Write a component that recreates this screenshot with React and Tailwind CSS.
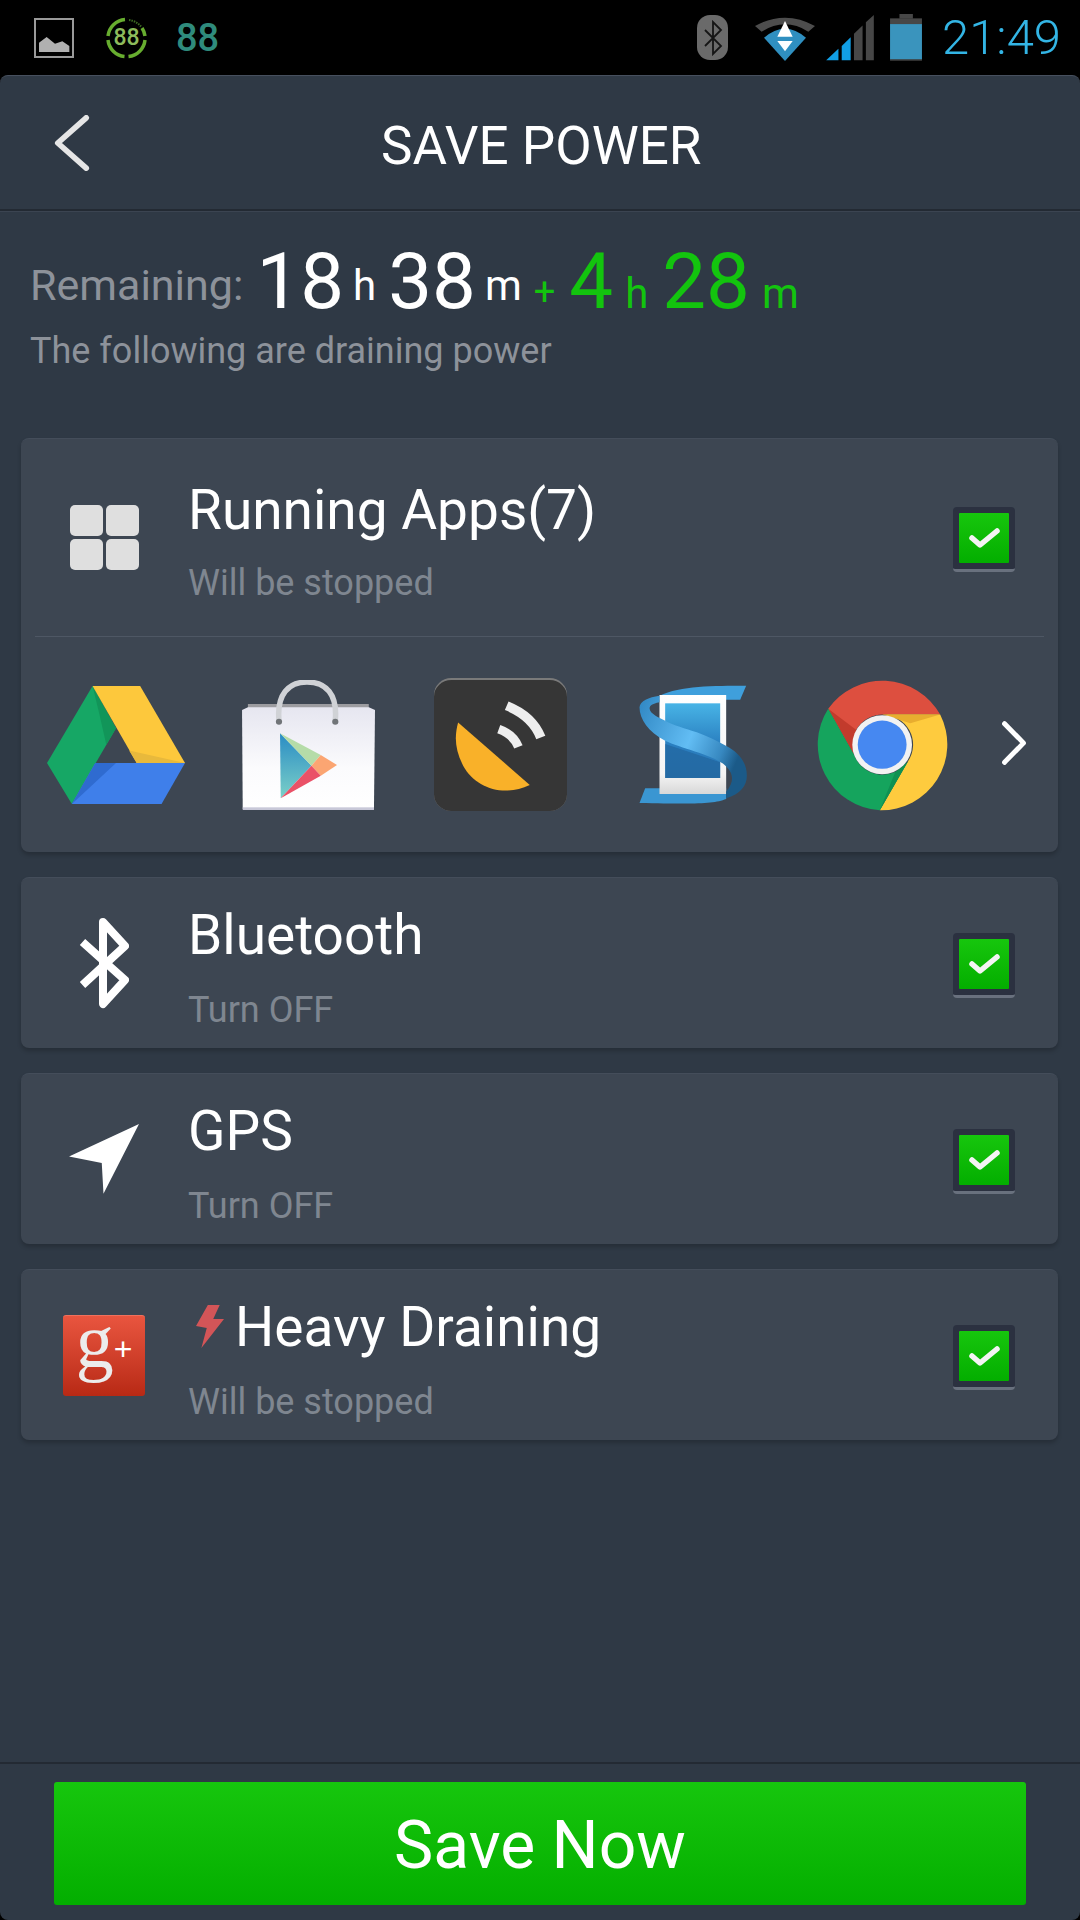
function StatusBar() {
  return (
    <div className="flex h-[75px] items-center bg-black">
      <svg viewBox="27 38 120 120" className="ml-[34px] h-[40px] w-[40px]">
        <rect x="30" y="41" width="114" height="114" fill="#000" stroke="#9a9a9a" strokeWidth="6" />
        <path d="M42 140 L42 112 L65 95 L90 115 L112 108 L133 122 L133 140 Z" fill="#b0b0b0" />
      </svg>
      <div className="relative ml-[31px] h-[42px] w-[43px]">
        <svg viewBox="0 0 43 42" className="h-full w-full" fill="none" stroke="#67ad2f" strokeWidth="3.5">
          <path d="M3 19 A18.5 18.5 0 0 1 20 2.5" />
          <path d="M24 3 A18.5 18.5 0 0 1 36 9.5" stroke="#3d6b22" strokeWidth="2" strokeDasharray="1.5 1" />
          <path d="M37 11 A18.5 18.5 0 0 1 40 19" />
          <path d="M40 23 A18.5 18.5 0 0 1 23.5 39.5" />
          <path d="M19.5 39.5 A18.5 18.5 0 0 1 3 23" />
        </svg>
        <div className="absolute inset-0 flex items-center justify-center text-[23px] font-medium leading-none text-[#8dbb5c]">88</div>
      </div>
      <div className="ml-[28px] w-[43px] text-[38px] font-medium leading-none text-[#2f8b7c]">88</div>
      <div className="ml-[478px] flex h-[45px] w-[31px] items-center justify-center rounded-[13px] bg-[#6a6a6a]">
        <svg viewBox="0 0 20 36" className="h-[36px] w-[20px]" fill="none" stroke="#151515" strokeWidth="1.8">
          <polyline points="2,10 18,26 10,34 10,2 18,10 2,26" />
        </svg>
      </div>
      <svg viewBox="195 30 180 135" className="ml-[27px] mt-[1px] h-[45px] w-[60px]">
        <path d="M195 60 Q285 10 375 60 L355 77 Q285 33 215 77 Z" fill="#4d4d4d" />
        <path d="M222 95 Q285 41 348 95 L285 165 Z" fill="#2f8fc0" />
        <path d="M285 45 L262 92 L308 92 Z" fill="#fff" />
        <path d="M262 105 L308 105 L285 136 Z" fill="#fff" />
      </svg>
      <svg viewBox="405 25 150 142" className="ml-[10px] mt-[-1px] h-[47px] w-[50px]">
        <polygon points="408,165 445,130 445,165" fill="#119fe6" />
        <polygon points="455,165 455,122 482,95 482,165" fill="#119fe6" />
        <polygon points="492,165 492,85 518,60 518,165" fill="#474747" />
        <polygon points="528,165 528,50 552,28 552,165" fill="#474747" />
      </svg>
      <svg viewBox="600 25 95 140" className="ml-[15px] h-[47px] w-[32px]">
        <rect x="628" y="25" width="40" height="14" fill="#474747" />
        <rect x="600" y="38" width="95" height="18" fill="#474747" />
        <rect x="600" y="55" width="95" height="106" fill="#3a94bd" />
        <rect x="600" y="160" width="95" height="4" fill="#474747" />
      </svg>
      <div className="ml-[20px] text-[49px] font-light leading-none text-[#33b5e5]">21:49</div>
    </div>
  );
}

function DriveIcon() {
  return (
    <svg viewBox="78 128 400 355" preserveAspectRatio="none" className="ml-[26px] h-[118px] w-[138px]">
      <path d="M210 128 L278 255 L150 483 L78 360 Z" fill="#16a765" />
      <path d="M210 128 L278 255 L250 305 L228 205 Z" fill="#129559" />
      <path d="M210 128 L348 128 L478 360 L338 360 Z" fill="#fdc83c" />
      <path d="M316 322 L478 360 L338 360 Z" fill="#e8b93c" />
      <path d="M218 360 L478 360 L410 483 L150 483 Z" fill="#3f7fea" />
      <path d="M218 360 L278 360 L190 445 L150 483 Z" fill="#2f6bd0" />
    </svg>
  );
}

function PlayBagIcon() {
  return (
    <svg viewBox="642 118 388 390" preserveAspectRatio="none" className="ml-[56px] h-[130px] w-[134px]">
      <defs>
        <linearGradient id="bag" x1="0" y1="0" x2="0" y2="1">
          <stop offset="0" stopColor="#e6e6f0" />
          <stop offset="0.6" stopColor="#fbfbfd" />
          <stop offset="1" stopColor="#ffffff" />
        </linearGradient>
        <linearGradient id="playLeft" x1="0" y1="0" x2="0" y2="1">
          <stop offset="0" stopColor="#2a8cc4" />
          <stop offset="1" stopColor="#7bd0c8" />
        </linearGradient>
      </defs>
      <path d="M662 190 L1012 190 L1012 212 L662 212 Z" fill="#9c9ca0" />
      <path d="M645 208 L662 200 L1012 200 L1030 208 L1027 505 L647 505 Z" fill="url(#bag)" />
      <rect x="647" y="500" width="380" height="8" fill="#c8c8d8" />
      <path d="M752 240 C745 160 780 124 833 124 C888 124 922 160 915 240" fill="none" stroke="#d0d2d6" strokeWidth="16" />
      <circle cx="752" cy="243" r="9" fill="#707478" />
      <circle cx="915" cy="243" r="9" fill="#707478" />
      <path d="M755 278 L846 375 L757 473 Z" fill="url(#playLeft)" />
      <path d="M755 278 L873 343 L846 375 Z" fill="#b5dca8" />
      <path d="M873 343 L920 373 L873 405 L846 375 Z" fill="#fba572" />
      <path d="M846 375 L873 405 L757 473 Z" fill="#ea5167" />
    </svg>
  );
}

function GpsIcon() {
  return (
    <svg viewBox="1200 112 386 398" preserveAspectRatio="none" className="ml-[59px] h-[133px] w-[133px]">
      <rect x="1200" y="112" width="386" height="398" rx="50" fill="#7a7a7a" />
      <rect x="1200" y="118" width="386" height="392" rx="50" fill="#363636" />
      <path d="M1270 245 L1478 432 C1400 470 1320 440 1285 375 C1262 330 1258 290 1270 245 Z" fill="#f9b129" />
      <path d="M1411 195 Q1486 226 1510 290" fill="none" stroke="#eeeeee" strokeWidth="28" />
      <path d="M1388 265 Q1430 280 1445 318" fill="none" stroke="#eeeeee" strokeWidth="26" />
    </svg>
  );
}

function ScreenRibbonIcon() {
  return (
    <svg viewBox="27 28 323 360" className="ml-[72px] h-[120px] w-[108px]">
      <defs>
        <linearGradient id="screen" x1="0" y1="0" x2="0" y2="1">
          <stop offset="0" stopColor="#48b4e6" />
          <stop offset="0.55" stopColor="#2a7fc0" />
          <stop offset="1" stopColor="#2c78b6" />
        </linearGradient>
        <linearGradient id="frame" x1="0" y1="0" x2="0" y2="1">
          <stop offset="0" stopColor="#ffffff" />
          <stop offset="0.8" stopColor="#f4f4f4" />
          <stop offset="1" stopColor="#d8d8d8" />
        </linearGradient>
        <linearGradient id="ribbon" x1="0" y1="0" x2="1" y2="0.4">
          <stop offset="0" stopColor="#2f86c2" />
          <stop offset="0.55" stopColor="#62bdf4" />
          <stop offset="0.85" stopColor="#3788c0" />
          <stop offset="1" stopColor="#1b5a88" />
        </linearGradient>
      </defs>
      <path d="M88 60 C150 30 250 30 348 30 L330 72 L88 72 Z" fill="#3f9fdc" />
      <path d="M45 338 L288 338 L288 370 C250 385 200 385 28 382 Z" fill="#3a96d2" />
      <rect x="88" y="58" width="200" height="297" fill="url(#frame)" />
      <rect x="105" y="83" width="165" height="224" fill="url(#screen)" />
      <path d="M105 205 L270 260 L270 307 L105 307 Z" fill="#1f5f95" opacity="0.55" />
      <path d="M88 60 C55 65 30 75 28 95 C28 130 55 170 105 195 C150 217 240 235 280 265 C310 290 315 315 288 348 L288 368 C330 355 350 330 350 300 C350 255 320 228 290 212 C260 195 230 182 200 170 C165 157 130 150 105 135 C85 125 50 110 60 92 C65 85 78 82 88 80 Z" fill="url(#ribbon)" />
    </svg>
  );
}

function ChromeIcon() {
  return (
    <svg viewBox="797 113 392 397" preserveAspectRatio="none" className="ml-[69px] h-[133px] w-[133px]">
      <path d="M833 205 A195 197 0 0 1 1163 222 L992 222 A90 90 0 0 0 908 340 Z" fill="#dd4f3f" />
      <path d="M833 205 L908 340 L918 270 Z" fill="#c23b2c" />
      <path d="M1163 222 A195 197 0 0 1 985 508 L1068 362 A90 90 0 0 0 992 222 Z" fill="#fecb3e" />
      <path d="M992 222 L1163 222 L1075 248 Z" fill="#e8ad2f" />
      <path d="M985 508 A195 197 0 0 1 833 205 L908 340 A90 90 0 0 0 1068 362 Z" fill="#15a45d" />
      <path d="M985 508 L1068 362 L1030 395 Z" fill="#0f9152" />
      <circle cx="992" cy="312" r="88" fill="#f2f2f2" />
      <circle cx="992" cy="312" r="72" fill="#4688f1" />
    </svg>
  );
}

function Checkbox() {
  return (
    <div className="mr-[43px] mt-[4px] flex h-[65px] w-[62px] shrink-0 items-start justify-center rounded-[4px] border-b-[3px] border-[#69717e] bg-[#2b3140] pt-[6px]">
      <div className="h-[50px] w-[50px] rounded-[1px] bg-gradient-to-b from-[#16c60d] to-[#03ae00]">
        <svg viewBox="0 0 50 50" className="h-full w-full" fill="none" stroke="#f4f4f4" strokeWidth="5.5" strokeLinecap="round" strokeLinejoin="round">
          <polyline points="13,25 21,32 38,18" />
        </svg>
      </div>
    </div>
  );
}

function GridIcon() {
  return (
    <div className="grid grid-cols-2 gap-[3px]">
      <div className="h-[31px] w-[33px] rounded-[5px] bg-[#dfdfdf]" />
      <div className="h-[31px] w-[33px] rounded-[5px] bg-[#dfdfdf]" />
      <div className="h-[31px] w-[33px] rounded-[5px] bg-[#dfdfdf]" />
      <div className="h-[31px] w-[33px] rounded-[5px] bg-[#dfdfdf]" />
    </div>
  );
}

function BluetoothIcon() {
  return (
    <svg viewBox="0 0 50 91" className="h-[91px] w-[50px]" fill="none" stroke="#fff" strokeWidth="8" strokeLinejoin="round">
      <polyline points="3.5,24 46,62 24,86 24,4 46,28 3.5,67" />
    </svg>
  );
}

function NavIcon() {
  return (
    <svg viewBox="200 695 203 188" preserveAspectRatio="none" className="mb-[1px] h-[70px] w-[70px]">
      <path d="M403 695 L200 782 L295 800 L300 882 Z" fill="#fff" />
    </svg>
  );
}

function GooglePlusIcon() {
  return (
    <div className="flex h-[81px] w-[82px] items-center justify-center rounded-[3px] border-t border-[#f0705c] bg-gradient-to-b from-[#e9553f] to-[#b82914] font-['Liberation_Serif',serif] text-[#ececec]">
      <span className="mb-[30px] text-[76px] leading-none">g</span>
      <span className="mb-[14px] font-['Liberation_Sans',sans-serif] text-[32px] leading-none text-white">+</span>
    </div>
  );
}

function BoltIcon() {
  return (
    <svg viewBox="0 0 26 43" preserveAspectRatio="none" className="ml-[8px] mr-[11px] mt-[-1px] inline-block h-[43px] w-[28px]">
      <path d="M11 0 L22 0 L16 14 L26 14 L5 43 L10 23 L0 21 Z" fill="#d35558" />
    </svg>
  );
}

function BackArrow() {
  return (
    <svg viewBox="0 0 38 60" preserveAspectRatio="none" className="ml-[54px] h-[56px] w-[36px]" fill="none" stroke="#e6e6e6" strokeWidth="6" strokeLinecap="round" strokeLinejoin="round">
      <polyline points="34,3 4,30 34,57" />
    </svg>
  );
}

function NextArrow() {
  return (
    <svg viewBox="0 0 30 50" preserveAspectRatio="none" className="ml-[52px] mt-[-4px] h-[46px] w-[26px]" fill="none" stroke="#fff" strokeWidth="5.5" strokeLinecap="round" strokeLinejoin="round">
      <polyline points="4,4 26,25 4,46" />
    </svg>
  );
}

function RowText({ title, sub, bolt, gap }) {
  return (
    <div className="min-w-0 flex-1 pl-[1px] pt-[10px]">
      <div className="flex h-[60px] items-center text-[55px] leading-[60px] text-white">
        {bolt && <BoltIcon />}
        {title}
      </div>
      <div className={`${gap} text-[36px] leading-[44px] text-[#7f8690]`}>{sub}</div>
    </div>
  );
}

const rows = [
  { title: "Bluetooth", sub: "Turn OFF", icon: <BluetoothIcon /> },
  { title: "GPS", sub: "Turn OFF", icon: <NavIcon /> },
  { title: "Heavy Draining", sub: "Will be stopped", icon: <GooglePlusIcon />, bolt: true },
];

const cardClass = "rounded-[8px] border-t border-[#444d5a] bg-[#3d4652] shadow-[0_3px_4px_rgba(0,0,0,0.2)]";

export default function App() {
  return (
    <div className="h-[1920px] w-[1080px] overflow-hidden bg-black font-['Roboto',sans-serif]">
      <StatusBar />
      <div className="flex h-[1845px] flex-col rounded-[8px] border-t border-[#47505e] bg-[#2f3945]">
        <div className="flex h-[135px] shrink-0 items-center border-b-2 border-[#232a33]">
          <BackArrow />
          <div className="ml-[291px] mt-[7px] text-[53px] leading-none text-white">SAVE POWER</div>
        </div>

        <div className="flex-1 border-t border-[#3b4451] pl-[30px] pr-[22px]">
          <div className="mt-[25px] h-[90px] whitespace-nowrap text-[78px] leading-[90px] text-white">
            <span className="align-[8px] text-[43px] text-[#8d929a]">Remaining:</span>
            <span className="ml-[13px]">18</span>
            <span className="ml-[9px] align-[8px] text-[42px]">h</span>
            <span className="ml-[12px]">38</span>
            <span className="ml-[9px] align-[8px] text-[42px]">m</span>
            <span className="ml-[12px] align-[3px] text-[38px] text-[#13c40e]">+</span>
            <span className="ml-[14px] text-[#13c40e]">4</span>
            <span className="ml-[12px] text-[42px] text-[#13c40e]">h</span>
            <span className="ml-[14px] text-[#13c40e]">28</span>
            <span className="ml-[12px] text-[42px] text-[#13c40e]">m</span>
          </div>
          <div className="mt-[2px] text-[36px] leading-[44px] text-[#8d929a]">The following are draining power</div>

          <div className="-ml-[9px] mt-[65px] flex flex-col gap-[25px]">
            <div className={cardClass}>
              <div className="flex h-[197px] items-center">
                <div className="flex w-[166px] shrink-0 justify-center">
                  <GridIcon />
                </div>
                <RowText title="Running Apps(7)" sub="Will be stopped" gap="mt-[21px]" />
                <Checkbox />
              </div>
              <div className="mx-[14px] h-px bg-[#4e5764]" />
              <div className="flex h-[215px] items-center">
                <DriveIcon />
                <PlayBagIcon />
                <GpsIcon />
                <ScreenRibbonIcon />
                <ChromeIcon />
                <NextArrow />
              </div>
            </div>

            {rows.map((row) => (
              <div key={row.title} className={`${cardClass} flex h-[171px] items-center`}>
                <div className="flex w-[166px] shrink-0 justify-center">{row.icon}</div>
                <RowText title={row.title} sub={row.sub} bolt={row.bolt} gap="mt-[23px]" />
                <Checkbox />
              </div>
            ))}
          </div>
        </div>

        <div className="shrink-0 rounded-b-[8px] border-t-2 border-[#232a33] px-[54px] pb-[15px] pt-[18px]">
          <div className="flex h-[123px] items-center justify-center rounded-[3px] bg-gradient-to-b from-[#16c60d] to-[#03ae00] pt-[5px] text-[66px] leading-none text-white">
            Save Now
          </div>
        </div>
      </div>
    </div>
  );
}
